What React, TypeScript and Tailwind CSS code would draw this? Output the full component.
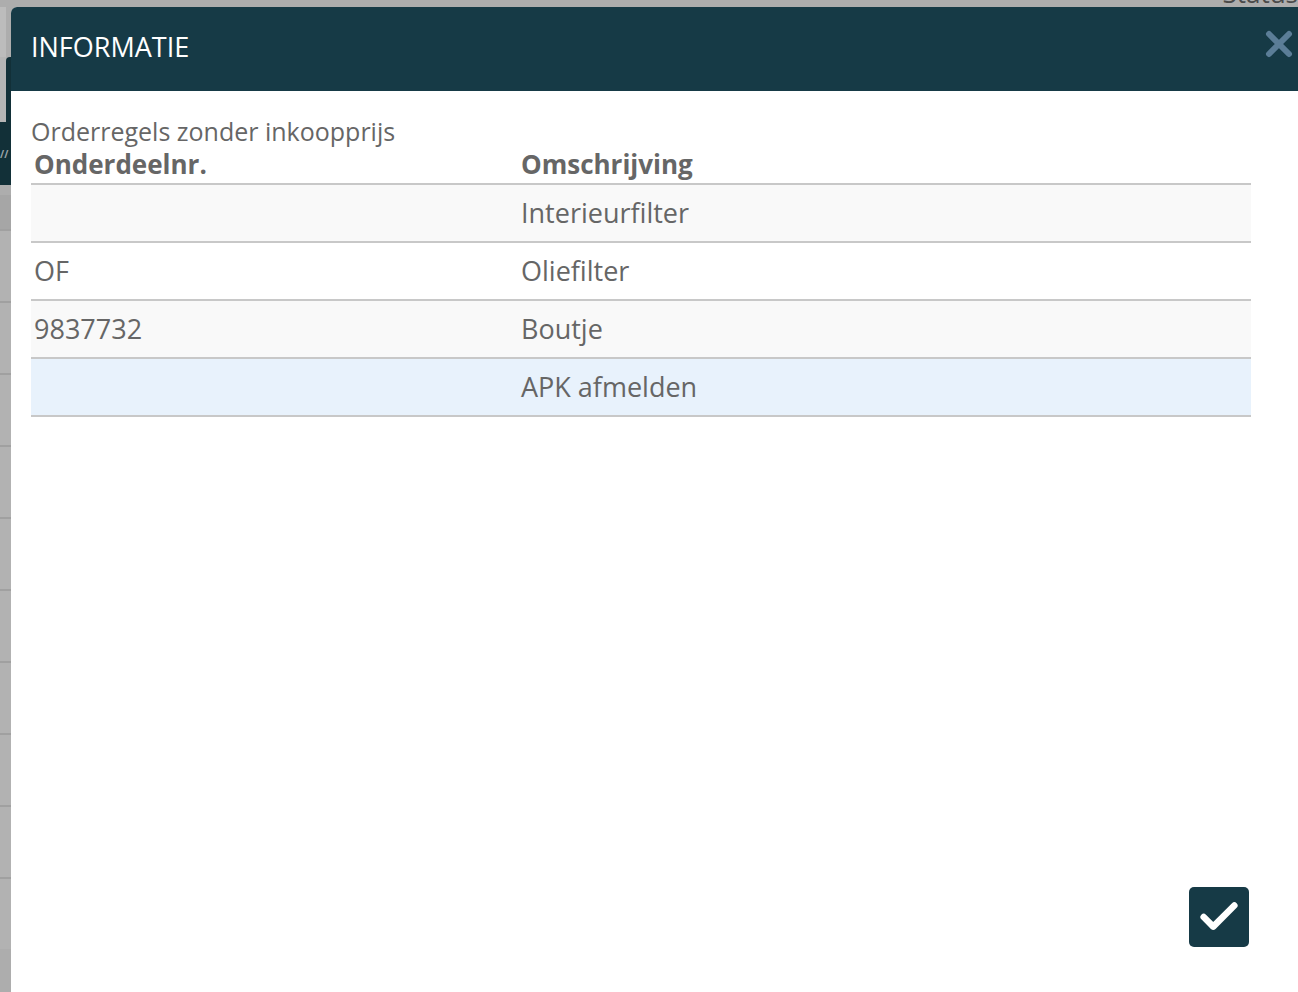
import { X, Check } from 'lucide-react';

const rows = [
  { nr: '', desc: 'Interieurfilter', bg: 'bg-[#f9f9f9]' },
  { nr: 'OF', desc: 'Oliefilter', bg: 'bg-white' },
  { nr: '9837732', desc: 'Boutje', bg: 'bg-[#f9f9f9]' },
  { nr: '', desc: 'APK afmelden', bg: 'bg-[#e8f2fc]' },
];

const Backdrop = () => (
  <div className="flex h-full w-full flex-col bg-[#adadad]">
    {/* top bar of the page behind */}
    <div className="flex h-[7px] justify-end overflow-visible">
      <span className="-mt-[22px] text-[26px] leading-[30px] text-[#4a4a4a]">Status</span>
    </div>
    <div className="flex flex-1">
      <div className="flex w-[11px] flex-col">
        <div className="h-[50px] border-r-[5px] border-[#adadad] bg-[#bcbcbc]" />
        <div className="flex h-[65px]">
          <div className="w-[6px] bg-[#b5b5b5]" />
          <div className="w-[5px] rounded-tl-[4px] bg-[#123038]" />
        </div>
        <div className="flex h-[63px] items-center bg-[#123038] text-[10px] font-bold leading-none text-[#9aa5a9]">//</div>
        <div className="h-[10px] bg-[#adadad]" />
        <div className="h-[34px] bg-[#a6a6a6]" />
        {Array.from({ length: 10 }).map((_, i) => (
          <div key={i} className="h-[72px] border-t-2 border-[#a0a0a0] bg-[#b2b2b2]" />
        ))}
      </div>
    </div>
  </div>
);

export default function App() {
  return (
    <div
      className="relative h-[992px] w-[1298px] overflow-hidden"
      style={{ fontFamily: '"Open Sans", "Noto Sans", sans-serif' }}
    >
      <Backdrop />

      {/* Modal */}
      <div className="absolute left-[11px] top-[7px] flex h-[1000px] w-[1300px] flex-col rounded-tl-[6px] bg-white">
        <div className="flex h-[84px] items-center justify-between rounded-tl-[6px] bg-[#163a46] pl-[20px] pr-[12px]">
          <h1 className="mb-[3px] text-[27px] font-normal text-white">INFORMATIE</h1>
          <X className="mb-[10px] h-[40px] w-[40px] text-[#5b7d97]" strokeWidth={3.6} />
        </div>

        <div className="flex flex-1 flex-col px-[20px] pt-[25px]">
          <div className="text-[25px] leading-[31px] text-[#666]">Orderregels zonder inkoopprijs</div>
          <table className="w-[1220px] border-collapse text-[#666]">
            <thead>
              <tr className="border-b-2 border-[#c8c8c8]">
                <th className="w-[40%] px-[3px] pb-[2px] text-left text-[26px] font-bold leading-[34px]">Onderdeelnr.</th>
                <th className="px-[2px] pb-[2px] text-left text-[26px] font-bold leading-[34px]">Omschrijving</th>
              </tr>
            </thead>
            <tbody>
              {rows.map((r) => (
                <tr key={r.desc} className={`h-[58px] border-b-2 border-[#c8c8c8] ${r.bg}`}>
                  <td className="px-[3px] text-[27px]">{r.nr}</td>
                  <td className="px-[2px] text-[27px]">{r.desc}</td>
                </tr>
              ))}
            </tbody>
          </table>

          <div className="mt-[470px] flex w-[1220px] justify-end pr-[2px]">
            <button className="flex h-[60px] w-[60px] items-center justify-center rounded-[5px] bg-[#163a46]">
              <Check className="h-[46px] w-[46px] text-white" strokeWidth={3.4} />
            </button>
          </div>
        </div>
      </div>
    </div>
  );
}
